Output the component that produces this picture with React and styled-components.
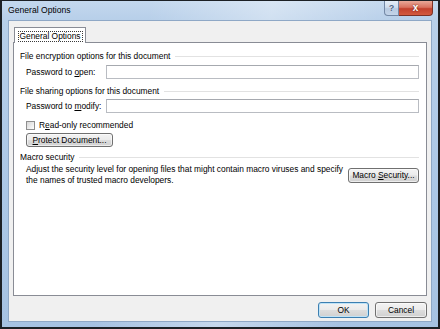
import React from 'react'
import styled, { createGlobalStyle } from 'styled-components'

const GlobalStyle = createGlobalStyle`
  html, body {
    margin: 0;
    padding: 0;
    background: #ffffff;
    overflow: hidden;
  }
  body {
    font-family: "Liberation Sans", Arial, sans-serif;
  }
`

const Window = styled.div`
  width: 440px;
  height: 329px;
  box-sizing: border-box;
  border-style: solid;
  border-color: #1c2025;
  border-width: 1px 2px 2px 2px;
  padding: 0 6px 5px 6px;
  display: flex;
  flex-direction: column;
  background:
    linear-gradient(100deg, rgba(255,255,255,0) 30%, rgba(255,255,255,0.35) 55%, rgba(255,255,255,0) 80%),
    linear-gradient(to bottom, #c4d8ee 0%, #b7cfe9 6%, #abc7e6 60%, #a6c2e2 100%);
`

const TitleBar = styled.div`
  height: 19px;
  display: flex;
  align-items: flex-start;
`

const Title = styled.span`
  font-size: 8.6px;
  line-height: 19px;
  color: #000;
`

const CaptionButtons = styled.div`
  margin-left: auto;
  margin-right: -1px;
  display: flex;
`

const CaptionButton = styled.div`
  height: 15px;
  width: ${p => p.$wide ? '34px' : '15px'};
  box-sizing: border-box;
  display: flex;
  align-items: center;
  justify-content: center;
  border: 1px solid ${p => p.$close ? '#7d3125' : '#7388a6'};
  border-top: none;
  border-left: ${p => p.$close ? 'none' : undefined};
  border-radius: ${p => p.$close ? '0 0 4px 0' : '0 0 0 4px'};
  background: ${p => p.$close
    ? 'linear-gradient(to bottom, #e9a898 0%, #d9725f 45%, #c3412d 55%, #d35a3f 100%)'
    : 'linear-gradient(to bottom, #e6eef8 0%, #cfdcec 45%, #b7c9e0 55%, #c3d4e9 100%)'};
  font-size: ${p => p.$close ? '10px' : '9px'};
  font-weight: bold;
  color: ${p => p.$close ? '#ffffff' : '#4d6282'};
  text-shadow: ${p => p.$close ? '0 0 2px #5a1a10' : '0 0 1px #ffffff'};
  line-height: 1;
`

const Client = styled.div`
  flex: 1;
  display: flex;
  flex-direction: column;
  background: #f0f0f0;
  border: 1px solid #8fa8c6;
  padding: 6px 4px 0 4px;
  min-height: 0;
`

const TabStrip = styled.div`
  display: flex;
  height: 16px;
  margin-bottom: -1px;
  position: relative;
  z-index: 1;
`

const Tab = styled.div`
  margin-left: 1px;
  width: 72px;
  box-sizing: border-box;
  background: #ffffff;
  border: 1px solid #898c95;
  border-bottom: none;
  display: flex;
  align-items: center;
  justify-content: center;
  padding-top: 1px;
`

const FocusLabel = styled.span`
  font-size: 8.4px;
  line-height: 9px;
  padding: 0 1px;
  border: 1px dotted #3a3a3a;
  color: #000;
`

const Panel = styled.div`
  flex: 1;
  background: #ffffff;
  border: 1px solid #898c95;
  padding: 8px 7px 0 6px;
  display: flex;
  flex-direction: column;
  font-size: 8.4px;
  color: #000;
`

const Heading = styled.div`
  display: flex;
  align-items: center;
  gap: 5px;
  line-height: 10px;
  margin-top: ${p => p.$top || 0}px;
  &::after {
    content: '';
    flex: 1;
    height: 1px;
    background: #e2e2e2;
  }
`

const Indent = styled.div`
  padding-left: 6px;
  margin-top: ${p => p.$top || 0}px;
  display: flex;
  align-items: center;
`

const FieldLabel = styled.label`
  width: 80px;
  line-height: 14px;
`

const TextInput = styled.div`
  flex: 1;
  height: 14px;
  box-sizing: border-box;
  border: 1px solid #b9bcc2;
  border-top-color: #a6a9af;
  background: #ffffff;
`

const Checkbox = styled.span`
  width: 9px;
  height: 9px;
  box-sizing: border-box;
  border: 1px solid #8f8f8f;
  background: linear-gradient(135deg, #d6d6d6 0%, #f2f2f2 70%, #ffffff 100%);
  margin-right: 4px;
`

const CheckLabel = styled.span`
  line-height: 10px;
`

const Button = styled.button`
  height: ${p => p.$h || 15}px;
  width: ${p => p.$w}px;
  box-sizing: border-box;
  padding: 0;
  margin: 0;
  border: 1px solid ${p => p.$default ? '#3c7fb1' : '#707070'};
  border-radius: 3px;
  background: linear-gradient(to bottom, #f3f3f3 0%, #ebebeb 48%, #dddddd 52%, #d0d0d0 100%);
  box-shadow: inset 0 0 0 1px ${p => p.$default ? '#bfe3f7' : 'rgba(255,255,255,0.6)'};
  font-family: inherit;
  font-size: 8.4px;
  color: #000;
  line-height: 1;
  flex-shrink: 0;
`

const MacroRow = styled.div`
  padding-left: 6px;
  margin-top: 2px;
  display: flex;
  align-items: center;
`

const Description = styled.p`
  margin: 0;
  width: 322px;
  line-height: 11px;
`

const Footer = styled.div`
  height: 25px;
  display: flex;
  justify-content: flex-end;
  align-items: flex-start;
  gap: 6px;
  padding-top: 6px;
  box-sizing: border-box;
`

const U = styled.span`
  text-decoration: underline;
`

export default function App() {
  return (
    <>
      <GlobalStyle />
      <Window>
        <TitleBar>
          <Title>General Options</Title>
          <CaptionButtons>
            <CaptionButton>?</CaptionButton>
            <CaptionButton $wide $close>x</CaptionButton>
          </CaptionButtons>
        </TitleBar>
        <Client>
          <TabStrip>
            <Tab><FocusLabel>General Options</FocusLabel></Tab>
          </TabStrip>
          <Panel>
            <Heading>File encryption options for this document</Heading>
            <Indent $top={4}>
              <FieldLabel>Password to <U>o</U>pen:</FieldLabel>
              <TextInput />
            </Indent>
            <Heading $top={7}>File sharing options for this document</Heading>
            <Indent $top={3}>
              <FieldLabel>Password to <U>m</U>odify:</FieldLabel>
              <TextInput />
            </Indent>
            <Indent $top={7}>
              <Checkbox />
              <CheckLabel>R<U>e</U>ad-only recommended</CheckLabel>
            </Indent>
            <Indent $top={3}>
              <Button $w={87} $h={14}><U>P</U>rotect Document...</Button>
            </Indent>
            <Heading $top={5}>Macro security</Heading>
            <MacroRow>
              <Description>
                Adjust the security level for opening files that might contain macro viruses and specify the names of trusted macro developers.
              </Description>
              <Button $w={71} style={{ marginLeft: 'auto' }}>Macro <U>S</U>ecurity...</Button>
            </MacroRow>
          </Panel>
          <Footer>
            <Button $w={51} $h={16} $default>OK</Button>
            <Button $w={52} $h={16}>Cancel</Button>
          </Footer>
        </Client>
      </Window>
    </>
  )
}
